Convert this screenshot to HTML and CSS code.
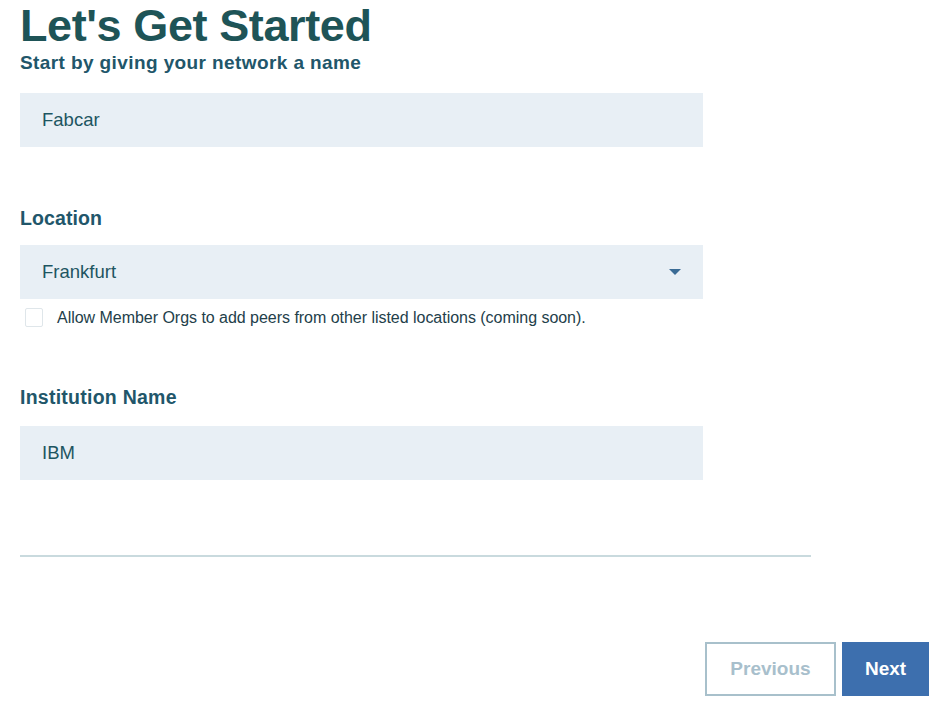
FILE: index.html
```html
<!DOCTYPE html>
<html>
<head>
<meta charset="utf-8">
<link rel="stylesheet" href="styles.css">
</head>
<body>
<div class="page">
  <h1 class="title">Let's Get Started</h1>
  <div class="subtitle">Start by giving your network a name</div>
  <div class="field first">
    <div class="input">Fabcar</div>
  </div>
  <div class="field">
    <div class="label">Location</div>
    <div class="input select">
      <span>Frankfurt</span>
      <svg class="caret" width="12" height="7" viewBox="0 0 12 7"><path d="M0 0 L12 0 L6 6 Z" fill="#3a6b95"/></svg>
    </div>
    <label class="check">
      <span class="box"></span>
      <span class="check-text">Allow Member Orgs to add peers from other listed locations (coming soon).</span>
    </label>
  </div>
  <div class="field inst">
    <div class="label">Institution Name</div>
    <div class="input">IBM</div>
  </div>
  <div class="divider"></div>
  <div class="actions">
    <button class="btn prev">Previous</button>
    <button class="btn next">Next</button>
  </div>
</div>
</body>
</html>
```
FILE: styles.css
```css
html, body {
  margin: 0;
  padding: 0;
  background: #ffffff;
}
body {
  font-family: "Liberation Sans", Arial, sans-serif;
  color: #1d5561;
}
.page {
  padding: 0 11px 0 20px;
  display: flex;
  flex-direction: column;
}
.title {
  margin: 0;
  font-size: 45px;
  font-weight: 700;
  line-height: 52px;
  color: #1e5457;
  letter-spacing: -0.4px;
}
.subtitle {
  margin-top: 0;
  font-size: 19px;
  font-weight: 700;
  line-height: 22px;
  color: #21566a;
  letter-spacing: 0.4px;
}
.field {
  display: flex;
  flex-direction: column;
  width: 683px;
}
.field.first {
  margin-top: 19px;
}
.label {
  font-size: 19.5px;
  font-weight: 700;
  line-height: 22px;
  color: #21566a;
  margin-top: 60px;
  margin-bottom: 16px;
  letter-spacing: 0.1px;
}
.inst .label {
  margin-top: 59px;
  margin-bottom: 18px;
  letter-spacing: 0.25px;
}
.input {
  height: 54px;
  box-sizing: border-box;
  background: #e8eff5;
  padding: 0 22px;
  display: flex;
  align-items: center;
  font-size: 18.5px;
  color: #1d5561;
}
.select {
  justify-content: space-between;
  padding-right: 22px;
}
.caret {
  margin-top: 1px;
}
.check {
  display: flex;
  align-items: center;
  margin-top: 9px;
  margin-left: 5px;
  gap: 14px;
}
.box {
  width: 16px;
  height: 17px;
  border: 1px solid #dfe6ea;
  border-radius: 2px;
  background: #fff;
}
.check-text {
  font-size: 16px;
  color: #23404a;
  letter-spacing: -0.03px;
}
.divider {
  margin-top: 75px;
  width: 791px;
  height: 2px;
  background: #c9dade;
}
.actions {
  margin-top: 85px;
  display: flex;
  justify-content: flex-end;
  gap: 6px;
}
.btn {
  height: 54px;
  box-sizing: border-box;
  font-family: "Liberation Sans", Arial, sans-serif;
  font-size: 19px;
  font-weight: 700;
  cursor: pointer;
}
.prev {
  width: 131px;
  background: #fff;
  border: 2px solid #a8c0cb;
  color: #a8bfcc;
}
.next {
  width: 87px;
  background: #3d6fae;
  border: none;
  color: #ffffff;
}
```
